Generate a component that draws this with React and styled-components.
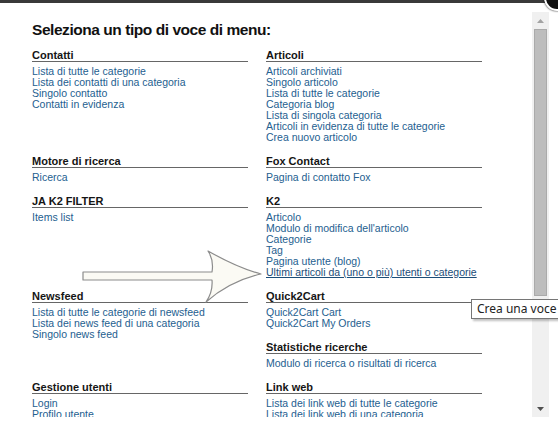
import React from 'react'
import styled, { createGlobalStyle } from 'styled-components'

const GlobalStyle = createGlobalStyle`
  html, body {
    margin: 0;
    padding: 0;
    overflow: hidden;
    background: #fff;
  }
`

const sections = {
  contatti: {
    title: 'Contatti',
    items: ['Lista di tutte le categorie', 'Lista dei contatti di una categoria', 'Singolo contatto', 'Contatti in evidenza'],
  },
  articoli: {
    title: 'Articoli',
    items: [
      'Articoli archiviati',
      'Singolo articolo',
      'Lista di tutte le categorie',
      'Categoria blog',
      'Lista di singola categoria',
      'Articoli in evidenza di tutte le categorie',
      'Crea nuovo articolo',
    ],
  },
  motore: { title: 'Motore di ricerca', items: ['Ricerca'] },
  fox: { title: 'Fox Contact', items: ['Pagina di contatto Fox'] },
  jak2: { title: 'JA K2 FILTER', items: ['Items list'] },
  k2: {
    title: 'K2',
    items: [
      'Articolo',
      "Modulo di modifica dell'articolo",
      'Categorie',
      'Tag',
      'Pagina utente (blog)',
      'Ultimi articoli da (uno o più) utenti o categorie',
    ],
    hovered: 5,
  },
  newsfeed: {
    title: 'Newsfeed',
    items: ['Lista di tutte le categorie di newsfeed', 'Lista dei news feed di una categoria', 'Singolo news feed'],
  },
  quick: { title: 'Quick2Cart', items: ['Quick2Cart Cart', 'Quick2Cart My Orders'] },
  stat: { title: 'Statistiche ricerche', items: ['Modulo di ricerca o risultati di ricerca'] },
  utenti: { title: 'Gestione utenti', items: ['Login', 'Profilo utente'] },
  link: {
    title: 'Link web',
    items: ['Lista dei link web di tutte le categorie', 'Lista dei link web di una categoria'],
  },
}

function Section({ data }) {
  return (
    <Block>
      <Heading>{data.title}</Heading>
      <List>
        {data.items.map((item, i) => (
          <Item key={item} $hover={data.hovered === i}>{item}</Item>
        ))}
      </List>
    </Block>
  )
}

function App() {
  return (
    <Page>
      <GlobalStyle />
      <TopBar />
      <CloseButton />
      <Frame>
        <Content>
          <Title>Seleziona un tipo di voce di menu:</Title>
          <Columns>
            <Section data={sections.contatti} />
            <Section data={sections.articoli} />
            <Section data={sections.motore} />
            <Section data={sections.fox} />
            <Section data={sections.jak2} />
            <Section data={sections.k2} />
            <Section data={sections.newsfeed} />
            <div>
              <Section data={sections.quick} />
              <Section data={sections.stat} />
            </div>
            <Section data={sections.utenti} />
            <Section data={sections.link} />
          </Columns>
        </Content>
        <Scrollbar>
          <ScrollButton>
            <svg width="7" height="4" viewBox="0 0 7 4"><path d="M0 4 L3.5 0 L7 4 Z" fill="#a3a3a3" /></svg>
          </ScrollButton>
          <Track>
            <Thumb />
          </Track>
          <ScrollButton>
            <svg width="7" height="4" viewBox="0 0 7 4"><path d="M0 0 L7 0 L3.5 4 Z" fill="#505050" /></svg>
          </ScrollButton>
        </Scrollbar>
      </Frame>
      <Arrow width="558" height="426" viewBox="0 0 558 426">
        <path
          d="M83 272 L212 272 Q214 260 208 251 Q238 268 261 274 Q230 281 206 302 Q213 292 212 280 L83 280 Z"
          fill="#fbfaf4"
          stroke="#8c8c8c"
          strokeWidth="1.2"
          strokeLinejoin="round"
        />
      </Arrow>
      <Tooltip>Crea una voce di menu</Tooltip>
    </Page>
  )
}

const Page = styled.div`
  position: relative;
  width: 558px;
  height: 426px;
  overflow: hidden;
  background: #fff;
  font-family: "Liberation Sans", Arial, sans-serif;
`

const TopBar = styled.div`
  height: 3px;
  width: 549px;
  background: #393939;
`

const CloseButton = styled.div`
  position: absolute;
  top: -15px;
  right: -12px;
  width: 22px;
  height: 22px;
  border-radius: 50%;
  background: #111;
  border: 2px solid #fff;
  box-shadow: 0 0 2px #000;
`

const Frame = styled.div`
  display: flex;
  margin-top: 9px;
  height: 405px;
  width: 549px;
`

const Content = styled.div`
  flex: 1;
  overflow: hidden;
  padding: 9px 0 0 32px;
`

const Title = styled.h1`
  margin: 0 0 10px;
  font-size: 15.5px;
  line-height: 18px;
  letter-spacing: -0.45px;
  font-weight: bold;
  color: #111;
`

const Columns = styled.div`
  display: grid;
  grid-template-columns: 216px 216px;
  column-gap: 18px;
  align-items: start;
`

const Block = styled.div`
  margin-bottom: 12px;
`

const Heading = styled.h3`
  margin: 0;
  font-size: 11px;
  line-height: 12px;
  font-weight: bold;
  color: #151515;
  border-bottom: 1px solid #666;
`

const List = styled.ul`
  margin: 4px 0 0;
  padding: 0;
  list-style: none;
`

const Item = styled.li`
  font-size: 10.5px;
  line-height: 11px;
  white-space: nowrap;
  color: ${(p) => (p.$hover ? '#1b4d78' : '#24608f')};
  text-decoration: ${(p) => (p.$hover ? 'underline' : 'none')};
  cursor: pointer;
`

const Scrollbar = styled.div`
  width: 17px;
  display: flex;
  flex-direction: column;
  background: #f0f0f0;
`

const ScrollButton = styled.div`
  height: 17px;
  display: flex;
  align-items: center;
  justify-content: center;
`

const Track = styled.div`
  flex: 1;
  padding: 0 2px;
`

const Thumb = styled.div`
  height: 267px;
  background: #bdbdbd;
  border: 1px solid #aaa;
  box-sizing: border-box;
`

const Arrow = styled.svg`
  position: absolute;
  left: 0;
  top: 0;
  pointer-events: none;
`

const Tooltip = styled.div`
  position: absolute;
  left: 471px;
  top: 299px;
  height: 20px;
  box-sizing: border-box;
  padding: 0 5px;
  white-space: nowrap;
  background: #fff;
  border: 1px solid #767676;
  box-shadow: 2px 2px 2px rgba(0, 0, 0, 0.25);
  font-family: "Noto Sans", "Open Sans", sans-serif;
  font-size: 12px;
  line-height: 18px;
  color: #222;
`

export default App
